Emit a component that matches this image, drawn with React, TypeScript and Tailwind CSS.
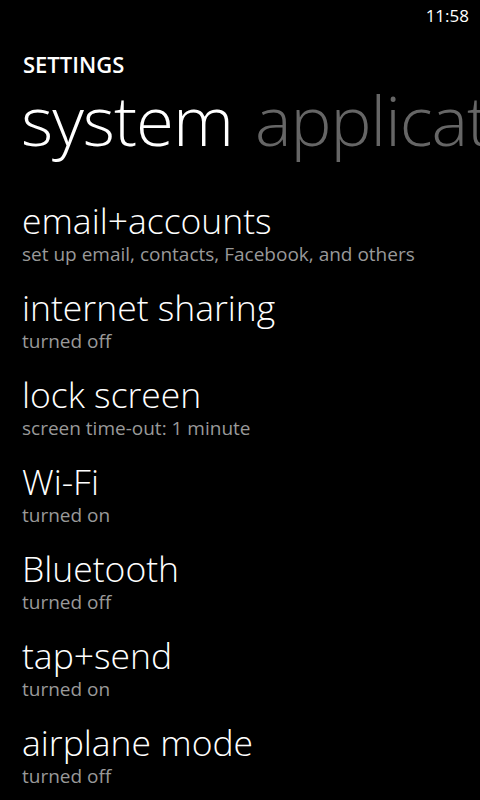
const items = [
  { title: "email+accounts", sub: "set up email, contacts, Facebook, and others" },
  { title: "internet sharing", sub: "turned off" },
  { title: "lock screen", sub: "screen time-out: 1 minute" },
  { title: "Wi-Fi", sub: "turned on" },
  { title: "Bluetooth", sub: "turned off" },
  { title: "tap+send", sub: "turned on" },
  { title: "airplane mode", sub: "turned off" },
];

export default function App() {
  return (
    <div
      className="w-[480px] h-[800px] overflow-hidden bg-black text-white"
      style={{ fontFamily: '"Open Sans", "Noto Sans", sans-serif' }}
    >
      {/* status bar */}
      <div className="flex h-[32px] items-center justify-end pr-[11px] text-[17px]">
        11:58
      </div>

      {/* title */}
      <div className="pl-[23px] pt-[24px] text-[22px] font-semibold leading-[16px]">
        SETTINGS
      </div>

      {/* pivot headers */}
      <div className="flex gap-[22px] overflow-hidden whitespace-nowrap pl-[21px] text-[69px] font-light leading-[94px] tracking-[-1px]">
        <span>system</span>
        <span className="text-[#666666]">applications</span>
      </div>

      {/* list */}
      <div className="mt-[31px] flex flex-col pl-[22px]">
        {items.map((item) => (
          <div key={item.title} className="flex h-[87px] flex-col">
            <div className="text-[35.5px] font-[350] leading-[46px]">{item.title}</div>
            <div className="text-[19px] leading-[22px] text-[#999999]">{item.sub}</div>
          </div>
        ))}
      </div>
    </div>
  );
}
